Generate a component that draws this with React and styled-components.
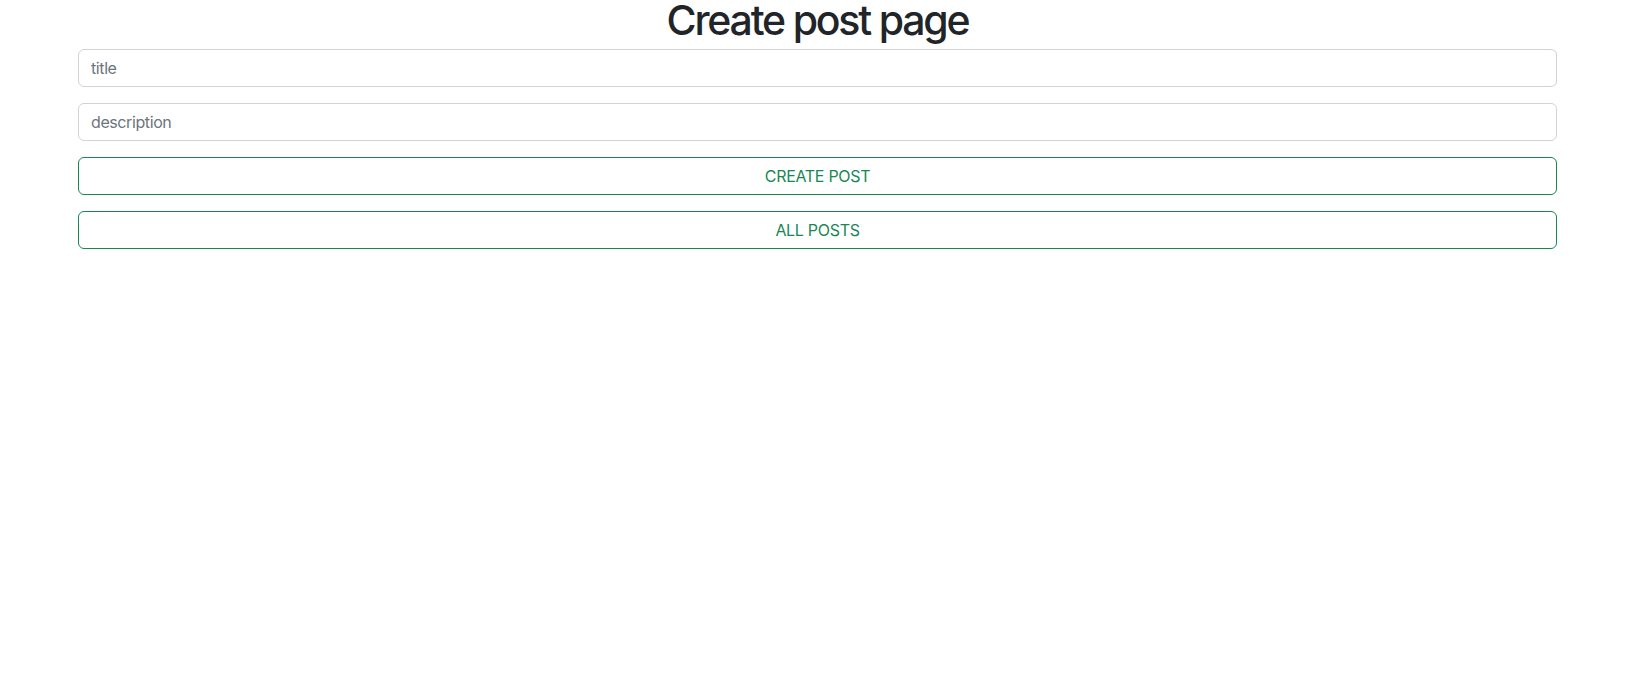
import React, { useState } from "react";
import styled, { createGlobalStyle } from "styled-components";

const GlobalStyle = createGlobalStyle`
  * {
    box-sizing: border-box;
  }
  body {
    margin: 0;
    background: #fff;
    color: #212529;
    font-family: Inter, "Noto Sans", sans-serif;
  }
`;

const Page = styled.div`
  padding: 0 75px 0 78px;
  display: flex;
  flex-direction: column;
  gap: 16px;
`;

const Title = styled.h1`
  margin: -4px 0 -12px;
  font-size: 41px;
  font-weight: 500;
  line-height: 1.2;
  letter-spacing: -2.2px;
  text-align: center;
`;

const Input = styled.input`
  display: block;
  width: 100%;
  height: 38px;
  padding: 6px 12px;
  font-family: inherit;
  font-size: 16px;
  line-height: 1.5;
  letter-spacing: -0.4px;
  color: #212529;
  border: 1px solid #ced4da;
  border-radius: 6px;
  outline: none;

  &::placeholder {
    color: #6c757d;
  }
`;

const Button = styled.button`
  display: block;
  width: 100%;
  height: 38px;
  padding: 6px 12px;
  font-family: inherit;
  font-size: 16px;
  line-height: 1.5;
  letter-spacing: -0.3px;
  color: #198754;
  background: transparent;
  border: 1px solid #198754;
  border-radius: 6px;
  cursor: pointer;
  text-transform: uppercase;
`;

const App = () => {
  const [title, setTitle] = useState("");
  const [description, setDescription] = useState("");

  return (
    <>
      <GlobalStyle />
      <Page>
        <Title>Create post page</Title>
        <Input
          placeholder="title"
          value={title}
          onChange={(e) => setTitle(e.target.value)}
        />
        <Input
          placeholder="description"
          value={description}
          onChange={(e) => setDescription(e.target.value)}
        />
        <Button>Create post</Button>
        <Button>All posts</Button>
      </Page>
    </>
  );
};

export default App;
